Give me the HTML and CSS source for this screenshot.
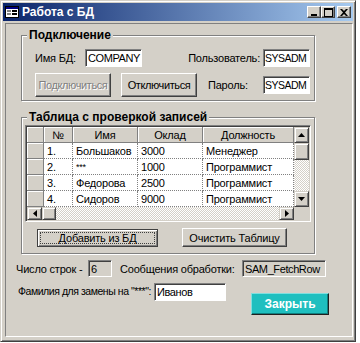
FILE: index.html
```html
<!DOCTYPE html>
<html lang="ru">
<head>
<meta charset="utf-8">
<title>Работа с БД</title>
<link rel="stylesheet" href="styles.css">
</head>
<body>
<div class="window">
  <div class="titlebar">
    <svg class="appicon" width="14" height="12" viewBox="0 0 14 12">
      <rect x="0.5" y="0.5" width="13" height="11" fill="#fff" stroke="#000"/>
      <rect x="1" y="1" width="12" height="2" fill="#000080"/>
      <rect x="2" y="4" width="4" height="2" fill="#808080"/>
      <rect x="7" y="4" width="5" height="2" fill="#000"/>
      <rect x="2" y="7" width="4" height="2" fill="#808080"/>
      <rect x="7" y="7" width="5" height="2" fill="#000"/>
    </svg>
    <span class="title">Работа с БД</span>
    <div class="controls">
      <span class="ctl"><svg width="8" height="8" viewBox="0 0 8 8"><rect x="1" y="6" width="6" height="2" fill="#000"/></svg></span>
      <span class="ctl"><svg width="9" height="9" viewBox="0 0 9 9"><rect x="0.5" y="0.5" width="8" height="8" fill="none" stroke="#000"/><rect x="0" y="1" width="9" height="1" fill="#000"/></svg></span>
      <span class="ctl close"><svg width="8" height="7" viewBox="0 0 8 7"><path d="M0 0h2l2 2 2-2h2l-3 3.5 3 3.5h-2l-2-2-2 2h-2l3-3.5z" fill="#000"/></svg></span>
    </div>
  </div>
  <div class="client">
    <div class="group g1">
      <div class="group-title">Подключение</div>
      <div class="row r1">
        <span class="lbl l-db">Имя БД:</span>
        <span class="field f-db">COMPANY</span>
        <span class="lbl l-user">Пользователь:</span>
        <span class="field f-user">SYSADM</span>
      </div>
      <div class="row r2">
        <span class="btn disabled">Подключиться</span>
        <span class="btn b-off">Отключиться</span>
        <span class="lbl l-pass">Пароль:</span>
        <span class="field f-user">SYSADM</span>
      </div>
    </div>

    <div class="group g2">
      <div class="group-title">Таблица с проверкой записей</div>
      <div class="grid">
        <table class="cells">
          <colgroup>
            <col class="c-ind"><col class="c-num"><col class="c-name"><col class="c-sal"><col class="c-pos">
          </colgroup>
          <tr class="head">
            <th class="ind"></th><th>№</th><th>Имя</th><th>Оклад</th><th>Должность</th>
          </tr>
          <tr><td class="ind"></td><td>1.</td><td>Большаков</td><td>3000</td><td>Менеджер</td></tr>
          <tr><td class="ind"></td><td>2.</td><td class="stars">***</td><td>1000</td><td>Программист</td></tr>
          <tr><td class="ind"></td><td>3.</td><td>Федорова</td><td>2500</td><td>Программист</td></tr>
          <tr><td class="ind"></td><td>4.</td><td>Сидоров</td><td>9000</td><td>Программист</td></tr>
        </table>
        <div class="vscroll">
          <span class="sbtn"><svg width="7" height="4" viewBox="0 0 7 4"><path d="M3.5 0L7 4H0z" fill="#000"/></svg></span>
          <span class="thumb"></span>
          <span class="track"></span>
          <span class="sbtn"><svg width="7" height="4" viewBox="0 0 7 4"><path d="M0 0h7L3.5 4z" fill="#000"/></svg></span>
        </div>
        <div class="hscroll">
          <span class="sbtn h"><svg width="4" height="7" viewBox="0 0 4 7"><path d="M4 0v7L0 3.5z" fill="#000"/></svg></span>
          <span class="thumb h"></span>
          <span class="track"></span>
          <span class="sbtn h"><svg width="4" height="7" viewBox="0 0 4 7"><path d="M0 0l4 3.5L0 7z" fill="#000"/></svg></span>
        </div>
        <div class="corner"></div>
      </div>
      <div class="row r3">
        <span class="btn b-add"><span class="focus">Добавить из БД</span></span>
        <span class="btn b-clear">Очистить Таблицу</span>
      </div>
    </div>

    <div class="row r4">
      <span class="lbl l-count">Число строк -</span>
      <span class="field ro f-count">6</span>
      <span class="lbl l-msg">Сообщения обработки:</span>
      <span class="field ro f-msg">SAM_FetchRow</span>
    </div>
    <div class="row r5">
      <span class="lbl l-name">Фамилия для замены на "***":</span>
      <span class="field f-name">Иванов</span>
      <span class="btn b-close">Закрыть</span>
    </div>
  </div>
</div>
</body>
</html>
```

FILE: styles.css
```css
* { box-sizing: border-box; }

body {
  margin: 0;
  background: #fff;
  font-family: "Liberation Sans", Arial, sans-serif;
  font-size: 11px;
  letter-spacing: -0.2px;
  color: #000;
}

.window {
  width: 356px;
  height: 342px;
  background: #d4d0c8;
  border: 1px solid;
  border-color: #d4d0c8 #404040 #404040 #d4d0c8;
  box-shadow: inset 1px 1px #fff, inset -1px -1px #808080;
  padding: 2px;
  display: flex;
  flex-direction: column;
}

/* title bar */
.titlebar {
  height: 18px;
  flex: none;
  display: flex;
  align-items: center;
  padding: 0 2px;
  background: linear-gradient(to right, #0a246a, #a6caf0);
}
.appicon { flex: none; }
.title {
  margin-left: 3px;
  color: #fff;
  font-weight: bold;
  font-size: 12px;
  letter-spacing: 0;
}
.controls {
  margin-left: auto;
  display: flex;
}
.ctl {
  width: 14px;
  height: 12px;
  display: flex;
  align-items: center;
  justify-content: center;
  background: #d4d0c8;
  border: 1px solid;
  border-color: #fff #404040 #404040 #fff;
  box-shadow: inset -1px -1px #808080;
}
.ctl.close { margin-left: 2px; }

/* client area */
.client {
  flex: 1;
  margin: 2px 0 2px 2px;
  border: 1px solid;
  border-color: #808080 #fff #fff #808080;
  display: flex;
  flex-direction: column;
}

/* group boxes */
.group {
  margin-left: 15px;
  width: 294px;
  border: 1px solid #808080;
  box-shadow: 1px 1px 0 #fff, inset 1px 1px 0 #fff;
  display: flex;
  flex-direction: column;
}
.group-title {
  margin: -8px 0 0 5px;
  padding: 0 2px;
  width: fit-content;
  background: #d4d0c8;
  font-weight: bold;
  font-size: 12px;
  line-height: 14px;
  letter-spacing: 0;
}
.g1 { margin-top: 11px; height: 66px; }
.g2 { margin-top: 16px; height: 137px; }

.row { display: flex; align-items: center; white-space: nowrap; }
.lbl { white-space: nowrap; }

.r1 { margin-top: 7px; padding-left: 13px; height: 18px; }
.l-db { width: 50px; }
.l-user { margin-left: auto; margin-right: 3px; }
.r1, .r2 { padding-right: 4px; }

.r2 { margin-top: 6px; padding-left: 13px; height: 24px; }
.l-pass { margin-left: 11px; }
.r2 .field { margin-left: auto; }

/* fields */
.field {
  flex: none;
  height: 18px;
  background: #fff;
  border: 1px solid;
  border-color: #808080 #fff #fff #808080;
  box-shadow: inset 1px 1px #404040;
  padding: 0 0 0 2px;
  line-height: 16px;
  white-space: nowrap;
  overflow: hidden;
  letter-spacing: -0.4px;
}
.field.ro { background: #d4d0c8; box-shadow: inset 1px 1px #404040; }
.f-db { width: 57px; }
.f-user { width: 47px; font-size: 10.5px; letter-spacing: -0.5px; padding-left: 1px; }

/* buttons */
.btn {
  flex: none;
  display: flex;
  align-items: center;
  justify-content: center;
  background: #d4d0c8;
  border: 1px solid;
  border-color: #fff #404040 #404040 #fff;
  box-shadow: inset -1px -1px #808080;
  white-space: nowrap;
}
.r2 .btn { width: 76px; height: 24px; letter-spacing: -0.4px; }
.b-off { margin-left: 10px; }
.btn.disabled {
  color: #808080;
  text-shadow: 1px 1px #fff;
}

/* data grid */
.grid {
  margin: 1px 0 0 3px;
  width: 286px;
  height: 97px;
  border: 1px solid;
  border-color: #808080 #fff #fff #808080;
  box-shadow: inset 1px 1px #404040, inset -1px -1px #d4d0c8;
  padding: 1px;
  display: grid;
  grid-template-columns: 267px 15px;
  grid-template-rows: 80px 13px;
  background: #fff;
}
.cells {
  border-collapse: separate;
  border-spacing: 0;
  table-layout: fixed;
  width: 267px;
  font-size: 11px;
}
.c-ind { width: 17px; }
.c-num { width: 29px; }
.c-name { width: 65px; }
.c-sal { width: 65px; }
.c-pos { width: 91px; }
.cells tr { height: 16px; }
.cells th {
  padding: 0;
  font-weight: normal;
  text-align: center;
  background: #d4d0c8;
  border-right: 1px solid #808080;
  border-bottom: 1px solid #808080;
  box-shadow: inset 1px 1px #fff;
  line-height: 14px;
}
.cells td {
  padding: 0 3px;
  line-height: 14px;
  white-space: nowrap;
  overflow: hidden;
  border-right: 1px dotted #808080;
  border-bottom: 1px dotted #808080;
}
.cells td.ind {
  background: #d4d0c8;
  border-right: 1px solid #808080;
  border-bottom: 1px solid #808080;
  box-shadow: inset 1px 1px #fff;
}
.stars { font-size: 9px; }

.vscroll, .hscroll { display: flex; }
.vscroll { flex-direction: column; }
.sbtn {
  flex: none;
  width: 15px;
  height: 16px;
  display: flex;
  align-items: center;
  justify-content: center;
  background: #d4d0c8;
  border: 1px solid;
  border-color: #d4d0c8 #404040 #404040 #d4d0c8;
  box-shadow: inset 1px 1px #fff, inset -1px -1px #808080;
}
.sbtn.h { width: 15px; height: 13px; }
.thumb {
  flex: none;
  width: 15px;
  height: 17px;
  background: #d4d0c8;
  border: 1px solid;
  border-color: #d4d0c8 #404040 #404040 #d4d0c8;
  box-shadow: inset 1px 1px #fff, inset -1px -1px #808080;
}
.thumb.h { width: 14px; height: 13px; }
.track {
  flex: 1;
  background: repeating-conic-gradient(#fff 0% 25%, #d4d0c8 0% 50%) 0 0 / 2px 2px;
}
.corner { background: #d4d0c8; }

.r3 { margin-top: 6px; padding-left: 15px; }
.b-add {
  width: 121px;
  height: 18px;
  border-color: #404040;
  box-shadow: inset 1px 1px #fff, inset -1px -1px #808080;
  padding: 2px;
}
.focus {
  flex: 1;
  align-self: stretch;
  display: flex;
  align-items: center;
  justify-content: center;
  border: 1px dotted #404040;
}
.b-clear { margin-left: 24px; width: 105px; height: 19px; }

/* bottom rows */
.r4 { margin-top: 6px; padding-left: 10px; height: 17px; }
.l-count { width: 72px; }
.f-count { width: 24px; height: 17px; }
.l-msg { margin-left: 8px; width: 122px; }
.f-msg { width: 84px; height: 17px; }

.r5 { margin-top: 6px; padding-left: 12px; align-items: flex-start; }
.l-name {
  flex: none;
  width: 136px;
  line-height: 17px;
  font-size: 10.5px;
  letter-spacing: -0.45px;
}
.f-name { width: 72px; height: 18px; }
.b-close {
  margin: 10px 0 0 25px;
  width: 78px;
  height: 22px;
  background: #1fbfbf;
  color: #fff;
  font-weight: bold;
  font-size: 12px;
  letter-spacing: 0;
  border-color: #7fdfdf #202020 #202020 #7fdfdf;
  box-shadow: inset -1px -1px #0f7f7f;
}
```
